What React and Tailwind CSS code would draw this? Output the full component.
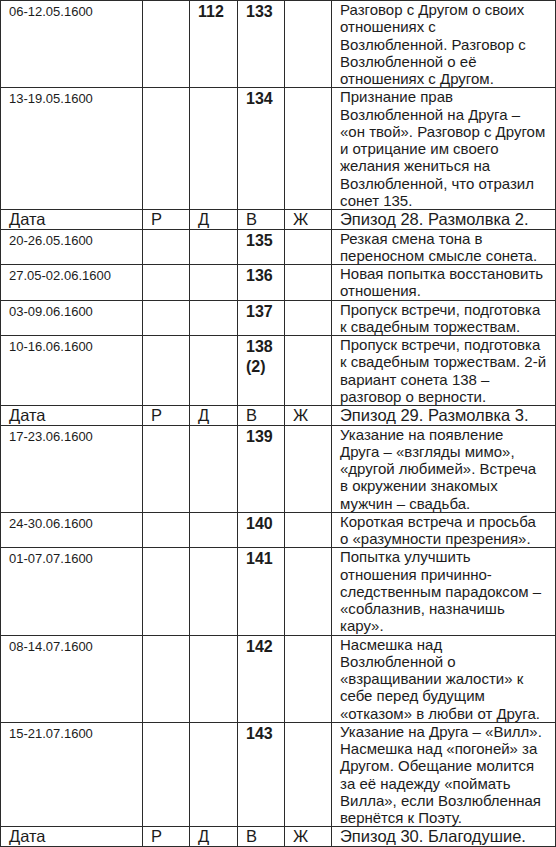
import React from "react";

const rows = [
  { date: "06-12.05.1600", d: "112", v: ["133"], text: ["Разговор с Другом о своих", "отношениях с", "Возлюбленной. Разговор с", "Возлюбленной о её", "отношениях с Другом."] },
  { date: "13-19.05.1600", v: ["134"], text: ["Признание прав", "Возлюбленной на Друга –", "«он твой». Разговор с Другом", "и отрицание им своего", "желания жениться на", "Возлюбленной, что отразил", "сонет 135."] },
  { head: "Эпизод 28. Размолвка 2." },
  { date: "20-26.05.1600", v: ["135"], text: ["Резкая смена тона в", "переносном смысле сонета."] },
  { date: "27.05-02.06.1600", v: ["136"], text: ["Новая попытка восстановить", "отношения."] },
  { date: "03-09.06.1600", v: ["137"], text: ["Пропуск встречи, подготовка", "к свадебным торжествам."] },
  { date: "10-16.06.1600", v: ["138", "(2)"], text: ["Пропуск встречи, подготовка", "к свадебным торжествам. 2-й", "вариант сонета 138 –", "разговор о верности."] },
  { head: "Эпизод 29. Размолвка 3." },
  { date: "17-23.06.1600", v: ["139"], text: ["Указание на появление", "Друга – «взгляды мимо»,", "«другой любимей». Встреча", "в окружении знакомых", "мужчин – свадьба."] },
  { date: "24-30.06.1600", v: ["140"], text: ["Короткая встреча и просьба", "о «разумности презрения»."] },
  { date: "01-07.07.1600", v: ["141"], text: ["Попытка улучшить", "отношения причинно-", "следственным парадоксом –", "«соблазнив, назначишь", "кару»."] },
  { date: "08-14.07.1600", v: ["142"], text: ["Насмешка над", "Возлюбленной о", "«взращивании жалости» к", "себе перед будущим", "«отказом» в любви от Друга."] },
  { date: "15-21.07.1600", v: ["143"], text: ["Указание на Друга – «Вилл».", "Насмешка над «погоней» за", "Другом. Обещание молится", "за её надежду «поймать", "Вилла», если Возлюбленная", "вернётся к Поэту."] },
  { head: "Эпизод 30. Благодушие." },
];

const cell = "border border-[#2b2b2b] align-top p-0 pl-2 pr-1";

function Lines({ items }) {
  return items.map((line, i) => (
    <div key={i} className="whitespace-nowrap">
      {line}
    </div>
  ));
}

export default function App() {
  return (
    <div className="w-[556px] h-[847px] bg-white overflow-hidden text-[#1c1c1c] font-['Liberation_Sans',Arial,sans-serif]">
      <table className="table-fixed border-collapse w-[555px]">
        <colgroup>
          <col className="w-[142px]" />
          <col className="w-[47px]" />
          <col className="w-[48px]" />
          <col className="w-[47px]" />
          <col className="w-[47px]" />
          <col className="w-[224px]" />
        </colgroup>
        <tbody>
          {rows.map((r, i) =>
            r.head ? (
              <tr key={i} className="text-[16.5px] leading-[18.5px]">
                <td className={cell}>Дата</td>
                <td className={cell}>Р</td>
                <td className={cell}>Д</td>
                <td className={cell}>В</td>
                <td className={cell}>Ж</td>
                <td className={cell}>{r.head}</td>
              </tr>
            ) : (
              <tr key={i} className="leading-[17.25px]">
                <td className={`${cell} text-[13px] pt-[2px]`}>{r.date}</td>
                <td className={cell}></td>
                <td className={`${cell} text-[16px] font-bold pt-[2px]`}>{r.d}</td>
                <td className={`${cell} text-[16px] font-bold pt-[2px]`}>
                  {r.v.map((n, k) => (
                    <div key={k} className="h-5">{n}</div>
                  ))}
                </td>
                <td className={cell}></td>
                <td className={`${cell} text-[15px]`}>
                  <Lines items={r.text} />
                </td>
              </tr>
            )
          )}
        </tbody>
      </table>
    </div>
  );
}
